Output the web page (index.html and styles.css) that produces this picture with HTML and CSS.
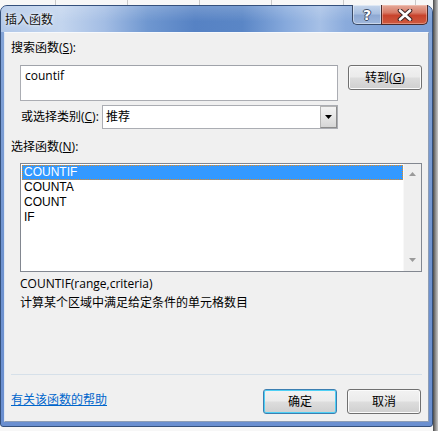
FILE: index.html
```html
<!DOCTYPE html>
<html lang="zh-CN">
<head>
<meta charset="utf-8">
<title>插入函数</title>
<link rel="stylesheet" href="styles.css">
</head>
<body>
<div class="desk">
  <div class="window">
    <div class="titlebar">
      <span class="title">插入函数</span>
      <div class="caption-btns">
        <div class="cap help"><span class="q">?</span></div>
        <div class="cap close">
          <svg width="16" height="12" viewBox="0 0 16 12">
            <path d="M3 1.5 L13 10.5 M13 1.5 L3 10.5" stroke="#3a2424" stroke-width="4.6" stroke-linecap="round"/>
            <path d="M3 1.5 L13 10.5 M13 1.5 L3 10.5" stroke="#ffffff" stroke-width="2.6" stroke-linecap="round"/>
          </svg>
        </div>
      </div>
    </div>
    <div class="client">
      <div class="lbl l1">搜索函数(<u>S</u>):</div>
      <div class="row r-search">
        <div class="textbox">countif</div>
        <div class="btn go">转到(<u>G</u>)</div>
      </div>
      <div class="row r-cat">
        <span class="lbl-cat">或选择类别(<u>C</u>):</span>
        <div class="select">
          <span class="sel-text">推荐</span>
          <div class="dd">
            <svg width="7" height="4" viewBox="0 0 7 4"><path d="M0 0 H7 L3.5 4 Z" fill="#000"/></svg>
          </div>
        </div>
      </div>
      <div class="lbl l2">选择函数(<u>N</u>):</div>
      <div class="listbox">
        <div class="items">
          <div class="item selected">COUNTIF</div>
          <div class="item">COUNTA</div>
          <div class="item">COUNT</div>
          <div class="item">IF</div>
        </div>
        <div class="scrollbar">
          <svg width="7" height="4" viewBox="0 0 7 4"><path d="M0 4 H7 L3.5 0 Z" fill="#9a9a9a"/></svg>
          <svg width="7" height="4" viewBox="0 0 7 4"><path d="M0 0 H7 L3.5 4 Z" fill="#9a9a9a"/></svg>
        </div>
      </div>
      <div class="sig">COUNTIF(range,criteria)</div>
      <div class="desc">计算某个区域中满足给定条件的单元格数目</div>
      <div class="sep"></div>
      <div class="footer">
        <a class="link" href="#">有关该函数的帮助</a>
        <div class="btn ok">确定</div>
        <div class="btn cancel">取消</div>
      </div>
    </div>
  </div>
</div>
</body>
</html>
```

FILE: styles.css
```css
* { box-sizing: border-box; margin: 0; padding: 0; }
html, body { width: 438px; height: 431px; overflow: hidden; }
body {
  background: #f4f4f4;
  font-family: "Open Sans", "Noto Sans CJK SC", sans-serif;
  font-size: 12px;
  color: #000;
}
.desk {
  height: 431px;
  padding-top: 5px;
  background:
    repeating-linear-gradient(to right, transparent 0 55px, #c9c9c9 55px 56px, transparent 56px 72px) 0 0 / 100% 5px no-repeat,
    linear-gradient(to right, transparent 0 433px, #4a4a4a 433px, #9a9a9a 436px, #c8c8c8 438px),
    #f7f7f7;
}
.window {
  width: 433px;
  height: 422px;
  border: 1px solid #34507c;
  border-radius: 7px 7px 3px 3px;
  background: linear-gradient(to bottom, #86a6d8 0%, #6f93cf 60%, #6a8fd0 100%);
  display: flex;
  flex-direction: column;
  padding: 0 3px 4px 3px;
}
.titlebar {
  height: 26px;
  margin: 0 -3px;
  padding-left: 4px;
  display: flex;
  justify-content: space-between;
  border-radius: 6px 6px 0 0;
  background:
    linear-gradient(to bottom, rgba(255,255,255,0.18), rgba(255,255,255,0) 60%),
    linear-gradient(to right, #b2c8e8 0%, #c3d5ee 14%, #a3bde4 24%, #6f97d0 34%, #5682c4 45%, #5a86c6 56%, #86a9dc 66%, #a6c0e6 74%, #8aabdc 80%, #7da0d6 90%, #7c9fd6 100%);
}
.title {
  align-self: center;
  font-family: "Noto Sans CJK SC", sans-serif;
  font-size: 12px;
  line-height: 16px;
  margin-top: -1px;
  color: #111;
  text-shadow: 0 0 6px rgba(255,255,255,0.9), 0 0 3px rgba(255,255,255,0.8);
}
.caption-btns {
  display: flex;
  align-self: flex-start;
  margin-top: -1px;
  margin-right: 4px;
}
.cap {
  height: 20px;
  display: flex;
  align-items: center;
  justify-content: center;
  border: 1px solid #3a4a66;
  border-top: none;
}
.help {
  width: 29px;
  border-radius: 0 0 0 5px;
  border-right: none;
  background: linear-gradient(to bottom, #c6d6ec 0%, #a8bfe0 45%, #8ea9d3 55%, #9fb7dc 100%);
  box-shadow: inset 0 0 0 1px rgba(255,255,255,0.45);
}
.q {
  font-family: "DejaVu Sans", sans-serif;
  font-weight: bold;
  font-size: 14px;
  line-height: 14px;
  color: #fff;
  text-shadow: 1px 0 0 #3d4d66, -1px 0 0 #3d4d66, 0 1px 0 #3d4d66, 0 -1px 0 #3d4d66;
}
.close {
  width: 47px;
  border-radius: 0 0 5px 0;
  border-color: #4a2a2a;
  background: linear-gradient(to bottom, #e4aa9a 0%, #d77a66 40%, #c8432c 55%, #cf5a40 100%);
  box-shadow: inset 0 0 0 1px rgba(255,220,210,0.4);
}
.client {
  flex: 1;
  background: #f0f0f0;
  border: 1px solid;
  border-color: #f7f9fc #8d9db5 #8d9db5 #dfe7f1;
  padding-left: 6px;
}
.lbl { line-height: 16px; height: 16px; }
.l1 { margin-top: 7px; }
.row { display: flex; align-items: center; }
.r-search { margin-top: 9px; align-items: flex-start; }
.textbox {
  margin-left: 9px;
  width: 318px;
  height: 36px;
  background: #fff;
  border: 1px solid #abadb3;
  border-top-color: #a0a3aa;
  padding: 2px 4px;
  line-height: 16px;
}
.btn {
  width: 74px;
  height: 25px;
  display: flex;
  align-items: center;
  justify-content: center;
  border: 1px solid #707070;
  border-radius: 3px;
  background: linear-gradient(to bottom, #f2f2f2 0%, #ebebeb 48%, #dddddd 52%, #cfcfcf 100%);
  box-shadow: inset 0 0 0 1px #fbfbfb;
  line-height: 16px;
}
.go { margin-left: 10px; }
.r-cat { margin-top: 4px; }
.lbl-cat { margin-left: 10px; width: 81px; line-height: 16px; }
.select {
  width: 236px;
  height: 24px;
  background: #fff;
  border: 1px solid #abadb3;
  display: flex;
  align-items: center;
}
.sel-text { flex: 1; padding-left: 3px; line-height: 16px; }
.dd {
  width: 17px;
  height: 22px;
  display: flex;
  align-items: center;
  justify-content: center;
  border: 1px solid #8c8c8c;
  border-top-color: #b5b5b5;
  border-left-color: #b5b5b5;
  background: linear-gradient(to bottom, #f3f3f3 0%, #e6e6e6 50%, #d6d6d6 100%);
}
.l2 { margin-top: 10px; }
.listbox {
  margin-top: 8px;
  margin-left: 9px;
  width: 402px;
  height: 109px;
  background: #fff;
  border: 1px solid #828790;
  display: flex;
}
.items { width: 382px; padding: 1px 0 0 1px; }
.item {
  height: 15px;
  line-height: 15px;
  padding-left: 2px;
  font-family: "Liberation Sans", "Noto Sans CJK SC", sans-serif;
  font-size: 12px;
  overflow: hidden;
}
.item.selected {
  background: #3399ff;
  color: #fff;
  outline: 1px dotted #e88a1c;
  outline-offset: -1px;
}
.scrollbar {
  width: 18px;
  background: #efefef;
  border-left: 1px solid #f8f8f8;
  display: flex;
  flex-direction: column;
  align-items: center;
  justify-content: space-between;
  padding: 8px 0 9px;
}
.sig { margin-top: 4px; margin-left: 9px; line-height: 16px; }
.desc { margin-top: 3px; margin-left: 9px; line-height: 16px; }
.sep { margin-top: 63px; width: 411px; height: 1px; background: #d6e0e9; }
.footer {
  margin-top: 14px;
  width: 410px;
  display: flex;
  align-items: center;
  gap: 10px;
}
.link {
  margin-right: auto;
  color: #0066cc;
  text-decoration: underline;
  line-height: 16px;
  margin-top: -3px;
}
.ok {
  border-color: #3c7fb1;
  box-shadow: inset 0 0 0 1px #4ed0f5;
}
```
